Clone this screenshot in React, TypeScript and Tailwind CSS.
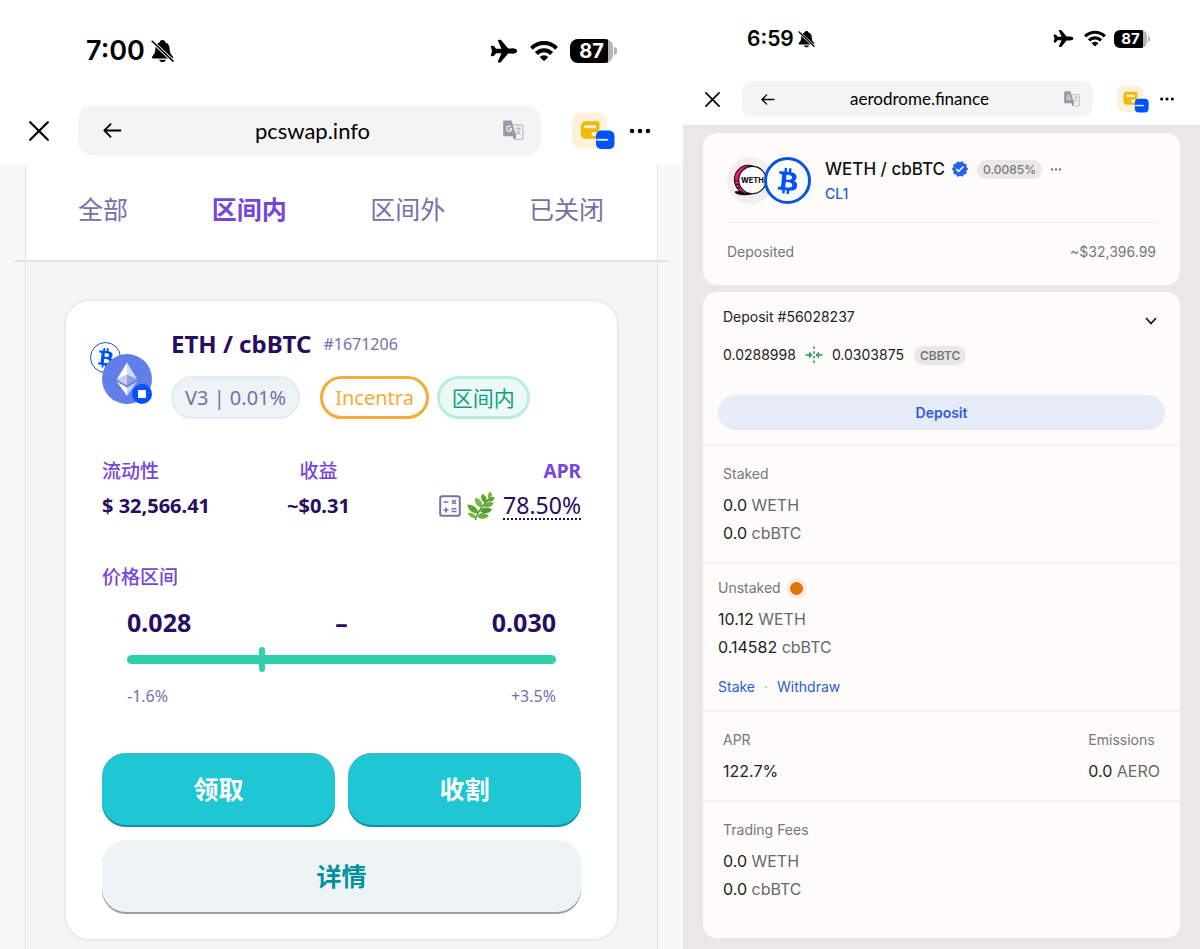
import { FaBtc } from "react-icons/fa";
import { IoAirplane } from "react-icons/io5";
import { MdVerified } from "react-icons/md";

function BellOff({ className }: { className: string }) {
  return (
    <svg viewBox="0 0 24 24" className={className}>
      <path
        d="M12 .6c-1.500 0-2.700.9-2.900 2.200C6.100 3.800 4.600 6.300 4.600 9.400c0 4.200-1.200 5.900-2.900 7.700-1 1.100-1 2.600.6 2.600h19.400c1.600 0 1.600-1.500.6-2.600-1.700-1.800-2.900-3.500-2.900-7.700 0-3.100-1.500-5.600-4.500-6.600C14.700 1.500 13.500.6 12 .6z"
        fill="currentColor"
      />
      <path d="M8.500 21h7c-.4 1.500-1.700 2.500-3.500 2.500S8.900 22.500 8.500 21z" fill="currentColor" />
      <path d="M0 .8 24 23.600" stroke="#fff" strokeWidth="3.400" />
      <path d="M1.200 1.800 23 22.600" stroke="currentColor" strokeWidth="1.600" strokeLinecap="round" />
    </svg>
  );
}

function Wifi({ className }: { className: string }) {
  return (
    <svg viewBox="0 0 28 21" className={className} fill="none" stroke="currentColor" strokeWidth="4">
      <path d="M1.500 7.800a17.600 17.600 0 0 1 25 0" />
      <path d="M6.300 13a10.800 10.800 0 0 1 15.400 0" />
      <path d="M14 20.800l-4.300-4.400a6.200 6.200 0 0 1 8.600 0z" fill="currentColor" stroke="none" />
    </svg>
  );
}

function Close({ className }: { className: string }) {
  return (
    <svg viewBox="0 0 20 20" className={className} fill="none" stroke="currentColor" strokeWidth="2.200" strokeLinecap="round">
      <path d="M1.200 1.200l17.600 17.600M18.800 1.200L1.200 18.800" />
    </svg>
  );
}

function Back({ className }: { className: string }) {
  return (
    <svg viewBox="0 0 20 16" className={className} fill="none" stroke="currentColor" strokeWidth="1.900" strokeLinecap="round" strokeLinejoin="round">
      <path d="M18.500 8H1.500M8 1.300L1.300 8 8 14.700" />
    </svg>
  );
}

function Dots({ className }: { className: string }) {
  return (
    <svg viewBox="0 0 22 6" className={className} fill="currentColor">
      <circle cx="3" cy="3" r="2.300" />
      <circle cx="11" cy="3" r="2.300" />
      <circle cx="19" cy="3" r="2.300" />
    </svg>
  );
}

function Translate({ className }: { className: string }) {
  return (
    <svg viewBox="0 0 22 22" className={className} fill="none">
      <path d="M11.500 5h8.300a1.200 1.200 0 0 1 1.200 1.200v13a1.200 1.200 0 0 1-1.200 1.200H13" stroke="#b6bac2" strokeWidth="1.300" />
      <path d="M13 8.700h6M16 7.200v1.500M18 8.700c-.6 2.800-2.400 5-5 6.300M14.200 11c.8 1.900 2.300 3.400 4.300 4.300" stroke="#b6bac2" strokeWidth="1.200" />
      <path d="M1.500.5H9l5 16.500H1.500A1.300 1.300 0 0 1 .2 15.700V1.800A1.300 1.300 0 0 1 1.500.5z" fill="#959ca8" />
      <path d="M10.500 17H14l-2.500 4z" fill="#7c838f" />
      <path d="M8.300 7.200a2.700 2.700 0 1 0 .8 2.100H6.400" stroke="#f4f4f4" strokeWidth="1.300" />
    </svg>
  );
}

function Wallet({ className }: { className: string }) {
  return (
    <svg viewBox="0 0 44 38" className={className}>
      <rect width="36" height="37" rx="10" fill="#fdf2d9" />
      <path d="M14 9h12.500a1.500 1.500 0 0 1 1.500 1.500V27H14a5 5 0 0 1-5-5v-8a5 5 0 0 1 5-5z" fill="#f0b90b" />
      <rect x="12.500" y="13" width="12" height="3.200" rx="1.200" fill="#fdf2d9" />
      <rect x="20" y="20" width="7" height="4" rx="1" fill="#fdf2d9" />
      <rect x="24.500" y="18.500" width="19" height="19" rx="5.500" fill="#0052ff" />
      <rect x="25" y="27" width="12" height="2" fill="#dbe7ff" />
    </svg>
  );
}

function EthIcon() {
  return (
    <svg viewBox="0 0 50 50" className="w-[50px] h-[50px]">
      <circle cx="25" cy="25" r="25" fill="#627eea" />
      <path d="M25 8.500v12.300l10.300 4.600z" fill="#d6ddf9" />
      <path d="M25 8.500L14.700 25.400 25 20.800z" fill="#fff" />
      <path d="M25 20.800v10.700l10.300-6.100z" fill="#8f9fe0" />
      <path d="M14.700 25.400L25 31.500V20.800z" fill="#c3cdf5" />
      <path d="M25 33.500v8.300l10.300-14.400z" fill="#c5cff7" />
      <path d="M25 41.800v-8.300l-10.300-6.100z" fill="#fff" />
    </svg>
  );
}

function WethIcon() {
  return (
    <svg viewBox="0 0 48 48" className="w-[47px] h-[47px]">
      <circle cx="24" cy="24" r="24" fill="#f1f0ef" />
      <path d="M7.500 35.500c4-1.500 12-1.500 22 0-2 2.500-6 3.500-11 3.500s-10-1-11-3.500z" fill="#111" />
      <ellipse cx="21.500" cy="23" rx="14.500" ry="15" fill="#111" />
      <ellipse cx="21.500" cy="23" rx="13.500" ry="14" fill="#e6177f" />
      <path d="M7.500 24h5M8.200 28h5M10.500 32l4.500-2" stroke="#111" strokeWidth="1" />
      <ellipse cx="26" cy="23.500" rx="14" ry="14" fill="#fff" stroke="#111" strokeWidth="1.200" />
      <text x="26" y="26.500" textAnchor="middle" fontSize="7.500" fontWeight="800" fontFamily="Inter" fill="#111">
        WETH
      </text>
    </svg>
  );
}

function CalcIcon() {
  return (
    <svg viewBox="0 0 22 22" className="w-[22px] h-[22px]" fill="none" stroke="#7a6eaa" strokeWidth="1.600">
      <rect x="1.200" y="1.200" width="19.600" height="19.600" rx="2" strokeWidth="2" />
      <path d="M4.500 7h5M4.500 15h5M7 12.500v5M12.500 13.700h5M12.500 16.500h5M13 5l4 4M17 5l-4 4" />
    </svg>
  );
}

function Leaf() {
  return (
    <svg viewBox="0 0 30 32" className="w-7 h-[30px]">
      <path d="M9 31c1-7 6-14 16-24" stroke="#4f9a2f" strokeWidth="1.600" fill="none" />
      <path d="M24 9c-3-3.500-2-6.500 1-8.500 2.500 2.500 2.500 5.500-1 8.500z" fill="#7cb83f" />
      <path d="M20 13c-5-2-6-6.500-3.500-10 4.500 2.500 5.500 6 3.500 10z" fill="#5ea135" />
      <path d="M22.500 11c.5-3.500 3.500-5 7-4.500-.3 4-3.500 5.500-7 4.500z" fill="#5ea135" />
      <path d="M16 18c-6-1.500-8.500-5.500-7-11 5.500 1.500 8.500 5.500 7 11z" fill="#7cb83f" />
      <path d="M18 16.500c1.500-4.500 6-6 10.500-4-1.500 4.500-6 6-10.500 4z" fill="#6cae3a" />
      <path d="M12 24C5.500 24 1 20.500.5 14.500c6.500.2 11.500 3.500 11.500 9.500z" fill="#5ea135" />
      <path d="M14 21.500c2.500-4.500 8-5 13-1.500-3.500 4.500-9 5-13 1.500z" fill="#4f9a2f" />
      <path d="M11 27c2.500-4.500 8-4.500 12.500-.5-3.500 4-9 4.500-12.500.5z" fill="#6cae3a" />
      <path d="M10 28.500c-4 1-7-.5-9.500-5 5-.8 8 1 9.500 5z" fill="#7cb83f" />
    </svg>
  );
}

function InRangeIcon() {
  return (
    <svg viewBox="0 0 18 18" className="w-[18px] h-[18px]" fill="none" stroke="#1f9d57" strokeWidth="1.500">
      <path d="M9 .5v17" strokeDasharray="2.500 2.200" />
      <path d="M0.500 9h5.500M4 6.500L6.500 9 4 11.500M17.500 9H12M14 6.500L11.500 9l2.500 2.500" />
    </svg>
  );
}

const tabs = ["全部", "区间内", "区间外", "已关闭"];

function PcSwap() {
  return (
    <section className="flex flex-col bg-white font-['Noto_Sans','Noto_Sans_CJK_SC',sans-serif]">
      <div className="flex items-center h-[102px] pl-[86px] pr-[66px] font-['Inter',sans-serif]">
        <span className="text-[27px] font-semibold text-black">7:00</span>
        <BellOff className="w-[23px] h-6 ml-1.5" />
        <IoAirplane className="w-7 h-7 ml-auto" />
        <Wifi className="w-7 h-[22px] ml-3" />
        <div className="flex items-center ml-3">
          <span className="w-[43px] h-6 rounded-[8px] bg-linear-to-r from-black from-88% to-[#b5b5b5] to-88% text-white text-[20px] leading-6 font-bold text-center">
            87
          </span>
          <span className="w-[3px] h-2 ml-px rounded-r-full bg-[#b5b5b5]" />
        </div>
      </div>
      <div className="flex items-center mt-1 mb-2.5 pl-[29px] pr-8">
        <button aria-label="Close"><Close className="w-5 h-5" /></button>
        <div className="flex items-center flex-1 h-[49px] ml-[29px] px-[25px] rounded-[14px] bg-[#f4f4f4]">
          <button aria-label="Back"><Back className="w-[19px] h-[15px]" /></button>
          <span className="flex-1 text-center text-[22px] font-['Lato',sans-serif] text-black">pcswap.info</span>
          <button aria-label="Translate" className="-mr-2"><Translate className="w-[21px] h-[21px]" /></button>
        </div>
        <button aria-label="Wallet" className="ml-[31px]"><Wallet className="w-[43px] h-[38px]" /></button>
        <button aria-label="More" className="ml-3.5"><Dots className="w-[22px] h-1.5" /></button>
      </div>

      <div className="flex flex-col flex-1 bg-[#f8f8f9]">
        <div className="mx-[14px] border-b-2 border-[#e4e4ea]">
          <nav className="flex items-center justify-between h-[95px] mx-[11px] pl-[52px] pr-[53px] pb-2 border-x border-[#e1e0ea] bg-white text-[25px] leading-9">
            {tabs.map((t) => (
              <a key={t} href="#" className={t === "区间内" ? "font-bold text-[#7645d9]" : "text-[#7a6eaa]"}>
                {t}
              </a>
            ))}
          </nav>
        </div>

        <div className="flex-1 mx-[25px] px-[38px] pt-[37px] pb-[9px] border-x border-[#e1e0ea] bg-[#f5f5f6]">
          <div className="rounded-[26px] border-2 border-[#ebe9f1] bg-white">
            <div className="flex px-6 pt-[27px]">
              <div className="relative shrink-0 w-[62px] h-[62px] mt-3.5 mr-[19px]">
                <span className="absolute left-0 top-0 flex items-center justify-center w-[31px] h-[31px] rounded-full border border-[#0a55e0] bg-white">
                  <FaBtc className="w-5 h-5 rotate-6 text-[#0052ff]" />
                </span>
                <span className="absolute right-0 bottom-0"><EthIcon /></span>
                <span className="absolute right-0 bottom-0 flex items-center justify-center w-5 h-5 rounded-full bg-[#0052ff]">
                  <span className="w-2 h-2 bg-white" />
                </span>
              </div>
              <div>
                <div className="flex items-center gap-3 h-8">
                  <h1 className="text-[24px] font-bold text-[#280d5f]">ETH / cbBTC</h1>
                  <span className="text-[16px] text-[#7a6eaa]">#1671206</span>
                </div>
                <div className="flex mt-4 text-[20px] leading-8">
                  <span className="flex items-center h-[43px] px-3 mr-5 rounded-full border-2 border-[#e1edef] bg-[#eef4f5] text-[#7a6eaa]">
                    V3 | 0.01%
                  </span>
                  <span className="flex items-center h-[43px] px-3 mr-2 rounded-full border-3 border-[#f5ab37] text-[#f5ab37]">
                    Incentra
                  </span>
                  <span className="flex items-center h-[43px] px-3 rounded-full border-3 border-[#b9eddd] bg-[#ebfaf7] text-[21px] text-[#129e7d]">
                    区间内
                  </span>
                </div>
              </div>
            </div>

            <div className="px-9 pb-[25px]">
              <div className="flex mt-[38px]">
                <div>
                  <h2 className="text-[19px] leading-7 font-medium text-[#7645d9]">流动性</h2>
                  <p className="mt-[5px] text-[20px] leading-8 font-bold text-[#280d5f]">$ 32,566.41</p>
                </div>
                <div className="ml-[77px] text-center">
                  <h2 className="text-[19px] leading-7 font-medium text-[#7645d9]">收益</h2>
                  <p className="mt-[5px] text-[20px] leading-8 font-bold text-[#280d5f]">~$0.31</p>
                </div>
                <div className="ml-auto text-right">
                  <h2 className="text-[19px] leading-7 font-bold text-[#7645d9]">APR</h2>
                  <div className="flex items-center mt-1.5">
                    <CalcIcon />
                    <span className="ml-1.5 mr-2"><Leaf /></span>
                    <span className="border-b-2 border-dotted border-[#280d5f] text-[23px] leading-[26px] text-[#280d5f]">78.50%</span>
                  </div>
                </div>
              </div>

              <h2 className="mt-[41px] text-[19px] leading-7 font-medium text-[#7645d9]">价格区间</h2>
              <div className="mt-[15px] px-[25px]">
                <div className="flex justify-between text-[25px] leading-8 font-bold text-[#280d5f]">
                  <span>0.028</span>
                  <span>–</span>
                  <span>0.030</span>
                </div>
                <div className="relative h-[9px] mt-[17px] rounded-full bg-[#31d0aa]">
                  <span className="absolute -top-2 w-1.5 h-[25px] rounded-full bg-[#31d0aa]" style={{ left: "30.8%" }} />
                </div>
                <div className="flex justify-between mt-5 text-[16px] leading-6 text-[#7a6eaa]">
                  <span>-1.6%</span>
                  <span>+3.5%</span>
                </div>
              </div>

              <div className="grid grid-cols-2 gap-[13px] mt-[45px] text-[25px] font-bold">
                <button className="h-[74px] rounded-[24px] bg-[#1fc7d4] text-white shadow-[inset_0_-2px_0_#1791a0,inset_0_1px_0_#5fb0bb]">领取</button>
                <button className="h-[74px] rounded-[24px] bg-[#1fc7d4] text-white shadow-[inset_0_-2px_0_#1791a0,inset_0_1px_0_#5fb0bb]">收割</button>
                <button className="col-span-2 h-[74px] rounded-[24px] bg-[#eef4f5] text-[#02919d] shadow-[inset_0_-2px_0_#9b9ea3]">详情</button>
              </div>
            </div>
          </div>
        </div>
      </div>
    </section>
  );
}

function Amount({ value, token }: { value: string; token: string }) {
  return (
    <p className="text-base leading-7 text-[#222]">
      {value} <span className="text-[#696969]">{token}</span>
    </p>
  );
}

function Aerodrome() {
  return (
    <section className="flex flex-col bg-white font-['Inter',sans-serif] text-sm leading-6 text-[#222]">
      <div className="flex items-center h-[77px] pl-[64px] pr-[50px] text-black">
        <span className="text-[21px] font-semibold">6:59</span>
        <BellOff className="w-[17px] h-[18px] ml-1" />
        <IoAirplane className="w-[21px] h-[21px] ml-auto" />
        <Wifi className="w-[22px] h-[17px] ml-2.5" />
        <div className="flex items-center ml-2">
          <span className="w-[33px] h-[18px] rounded-[6px] bg-linear-to-r from-black from-88% to-[#b5b5b5] to-88% text-white text-[15px] leading-[18px] font-bold text-center">
            87
          </span>
          <span className="w-[2px] h-1.5 ml-px rounded-r-full bg-[#b5b5b5]" />
        </div>
      </div>
      <div className="flex items-center mt-1 mb-2 pl-[22px] pr-[25px] text-black">
        <button aria-label="Close"><Close className="w-[15px] h-[15px]" /></button>
        <div className="flex items-center flex-1 h-9 ml-[22px] px-[19px] rounded-[10px] bg-[#f4f4f4]">
          <button aria-label="Back"><Back className="w-3.5 h-[11px]" /></button>
          <span className="flex-1 text-center text-[17px] font-['Lato',sans-serif]">aerodrome.finance</span>
          <button aria-label="Translate" className="-mr-1.5"><Translate className="w-4 h-4" /></button>
        </div>
        <button aria-label="Wallet" className="ml-6"><Wallet className="w-8 h-7" /></button>
        <button aria-label="More" className="ml-2.5"><Dots className="w-4 h-1" /></button>
      </div>

      <div className="flex-1 pl-5 pr-5 pt-2 pb-[11px] bg-[#e9e8e7]">
        <div className="px-6 pt-6 pb-[21px] rounded-[14px] bg-[#fdfcfa]">
          <div className="flex items-center">
            <WethIcon />
            <span className="relative flex items-center justify-center w-[47px] h-[47px] -ml-2.5 rounded-full border-3 border-[#0a55e0] bg-white">
              <FaBtc className="w-[26px] h-[26px] rotate-6 text-[#0052ff]" />
            </span>
            <div className="ml-3.5">
              <div className="flex items-center">
                <h1 className="text-[17px] leading-6 font-medium text-[#111]">WETH / cbBTC</h1>
                <MdVerified className="w-[18px] h-[18px] ml-1.5 text-[#2563eb]" />
                <span className="ml-2 px-1.5 rounded-full bg-[#e9e8e7] text-xs leading-[19px] font-medium text-[#777]">0.0085%</span>
                <button aria-label="Pool options" className="ml-2"><Dots className="w-3 h-[3px] text-[#696969]" /></button>
              </div>
              <a href="#" className="block mt-[3px] leading-5 font-medium text-[#2b5bdb]">CL1</a>
            </div>
          </div>
          <div className="flex justify-between mt-[18px] pt-[17px] border-t border-[#efeeec] text-[#777]">
            <span>Deposited</span>
            <span>~$32,396.99</span>
          </div>
        </div>

        <div className="mt-[7px] rounded-[14px] bg-[#fdfcfa]">
          <div className="px-[15px] pt-[13px] pb-3.5">
            <div className="flex items-center justify-between pl-[5px] pr-2">
              <h2>Deposit #56028237</h2>
              <button aria-label="Collapse">
                <svg viewBox="0 0 12 8" className="w-3 h-2 mt-2" fill="none" stroke="#111" strokeWidth="1.600">
                  <path d="M1 1l5 5.500L11 1" />
                </svg>
              </button>
            </div>
            <div className="flex items-center mt-3.5 pl-[5px]">
              <span>0.0288998</span>
              <span className="mx-[9px]"><InRangeIcon /></span>
              <span>0.0303875</span>
              <span className="ml-2.5 px-1.5 rounded-full bg-[#e9e8e7] text-xs leading-[19px] font-semibold text-[#777]">CBBTC</span>
            </div>
            <button className="block w-full h-[35px] mt-7 rounded-full bg-[#e7ebf8] font-semibold text-[#2b5bdb]">Deposit</button>
          </div>

          <div className="px-5 pt-4 pb-[15px] border-t-2 border-[#f2f1ef]">
            <h3 className="mb-[5px] text-[#777]">Staked</h3>
            <Amount value="0.0" token="WETH" />
            <Amount value="0.0" token="cbBTC" />
          </div>

          <div className="px-[15px] pt-3 pb-[11px] border-t-2 border-[#f2f1ef]">
            <h3 className="flex items-center mb-[5px] text-[#777]">
              Unstaked
              <span className="w-[21px] h-[21px] ml-[5px] rounded-full border-4 border-[#fbecdc] bg-[#dd7509]" />
            </h3>
            <Amount value="10.12" token="WETH" />
            <Amount value="0.14582" token="cbBTC" />
            <div className="flex mt-3.5 text-[#2b5bdb]">
              <a href="#">Stake</a>
              <span className="mx-[9px] text-[#aaa]">·</span>
              <a href="#">Withdraw</a>
            </div>
          </div>

          <div className="flex justify-between px-5 pt-4 pb-[15px] border-t-2 border-[#f2f1ef]">
            <div>
              <h3 className="mb-[5px] text-[#777]">APR</h3>
              <p className="text-base leading-7">122.7%</p>
            </div>
            <div>
              <h3 className="mb-[5px] text-[#777]">Emissions</h3>
              <Amount value="0.0" token="AERO" />
            </div>
          </div>

          <div className="px-5 pt-4 pb-[35px] border-t-2 border-[#f2f1ef]">
            <h3 className="mb-[5px] text-[#777]">Trading Fees</h3>
            <Amount value="0.0" token="WETH" />
            <Amount value="0.0" token="cbBTC" />
          </div>
        </div>
      </div>
    </section>
  );
}

export default function App() {
  return (
    <main className="grid grid-cols-[683fr_517fr] min-h-screen">
      <PcSwap />
      <Aerodrome />
    </main>
  );
}
